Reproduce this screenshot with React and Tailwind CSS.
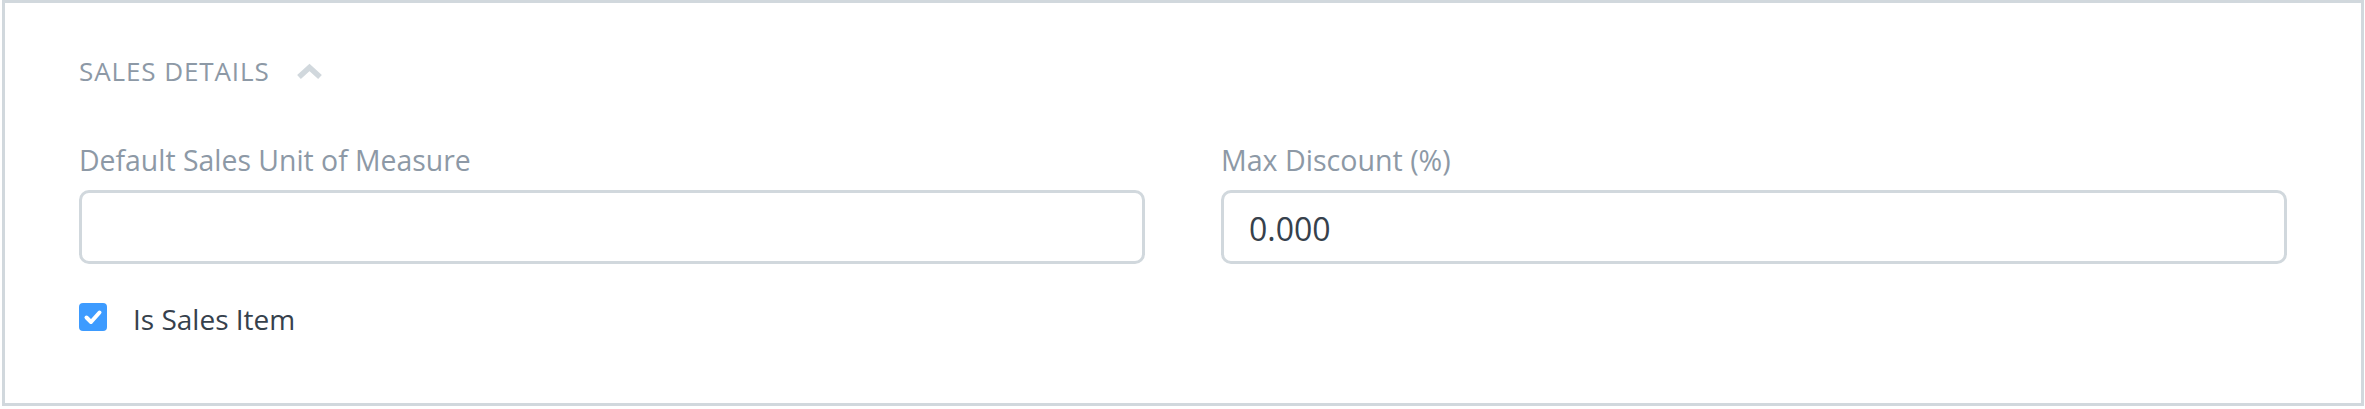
export default function App() {
  return (
    <div className="w-[2365px] h-[409px] bg-white pl-[2px] pr-[1px]" style={{ fontFamily: '"Open Sans", "Noto Sans", sans-serif' }}>
      <div className="h-[406px] border-[3px] border-[#d1d8dd] bg-white pt-[48px] pl-[74px] pr-[74px]">
        <div className="h-[40px] flex items-center">
          <span className="text-[26px] leading-[40px] tracking-[0.9px] text-[#8d99a6] uppercase">Sales Details</span>
          <svg className="ml-[26px]" width="27" height="17" viewBox="0 0 27 17">
            <polyline points="3,14 13.5,4.5 24,14" fill="none" stroke="#d1d8dd" strokeWidth="5.5" />
          </svg>
        </div>
        <div className="mt-[49px] grid grid-cols-2 gap-x-[76px]">
          <div>
            <div className="h-[40px] mb-[10px] flex items-center text-[28.4px] text-[#8d99a6]">Default Sales Unit of Measure</div>
            <div className="h-[74px] border-[3px] border-[#d1d8dd] rounded-[10px] bg-white"></div>
          </div>
          <div>
            <div className="h-[40px] mb-[10px] flex items-center text-[28.6px] text-[#8d99a6]">Max Discount (%)</div>
            <div className="h-[74px] border-[3px] border-[#d1d8dd] rounded-[10px] bg-white flex items-center pl-[25px] pt-[4px] text-[32px] text-[#36414c]">0.000</div>
          </div>
        </div>
        <div className="mt-[33px] h-[40px] flex items-center">
          <div className="w-[28px] h-[28px] rounded-[4px] bg-[#3d9bff] flex items-center justify-center">
            <svg width="20" height="20" viewBox="0 0 20 20">
              <polyline points="3.5,10.5 8,15 16.5,5.5" fill="none" stroke="#ffffff" strokeWidth="4" strokeLinecap="round" strokeLinejoin="round" />
            </svg>
          </div>
          <span className="ml-[26px] pt-[3px] text-[28px] text-[#36414c]">Is Sales Item</span>
        </div>
      </div>
    </div>
  );
}
